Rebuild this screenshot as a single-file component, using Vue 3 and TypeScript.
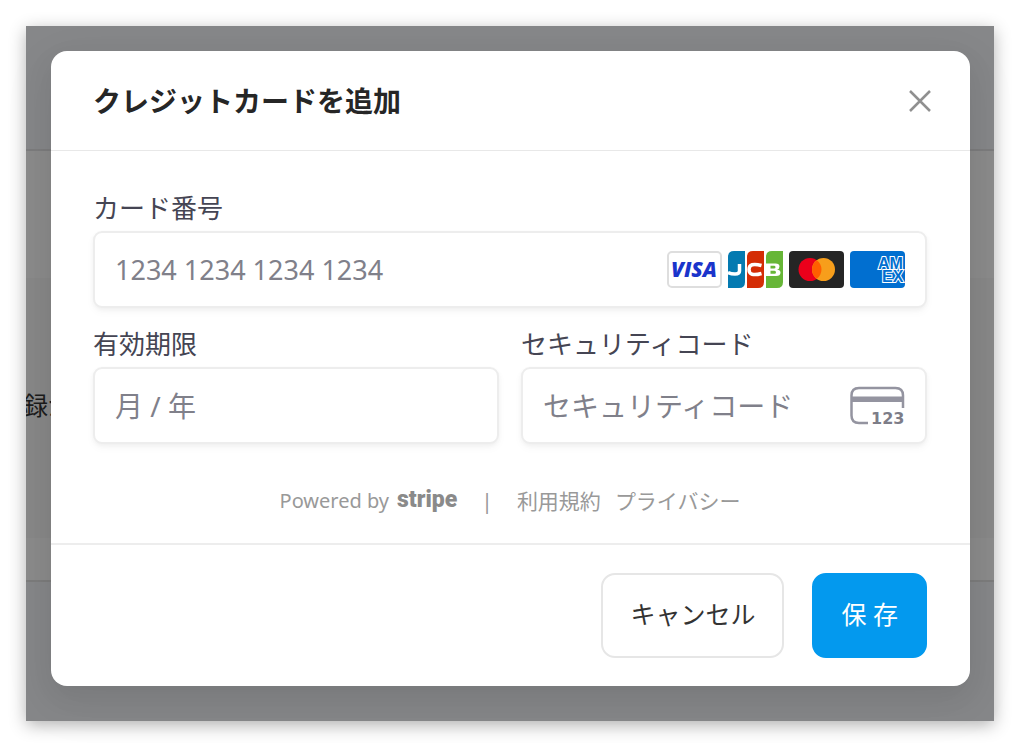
<script setup lang="ts">
import { ref } from 'vue'

const cardNumber = ref('')
const expiry = ref('')
const cvc = ref('')
</script>

<template>
  <main class="page">
    <div class="stage">
      <div class="backdrop" aria-hidden="true">
        <div class="backdrop-head"></div>
        <div class="backdrop-panel">
          <div class="backdrop-card"><span>録が</span></div>
        </div>
        <div class="backdrop-tail"></div>
      </div>

      <form class="modal" role="dialog" aria-labelledby="dialog-title" @submit.prevent>
        <header class="modal-head">
          <h1 id="dialog-title">クレジットカードを追加</h1>
          <button type="button" class="close" aria-label="閉じる">
            <svg viewBox="0 0 24 24" width="24" height="24">
              <path d="M2 2 22 22M22 2 2 22" fill="none" stroke="currentColor" stroke-width="2.5" />
            </svg>
          </button>
        </header>

        <div class="modal-body">
          <div class="fields">
            <div class="field wide">
              <label for="card-number">カード番号</label>
              <div class="control">
                <input id="card-number" v-model="cardNumber" class="digits" inputmode="numeric" placeholder="1234 1234 1234 1234" />
                <div class="brands">
                  <svg viewBox="0 0 55 37" role="img" aria-label="Visa">
                    <rect x="1" y="1" width="53" height="35" rx="4" fill="#fff" stroke="#dedede" stroke-width="2" />
                    <text x="27" y="26" class="visa">VISA</text>
                  </svg>
                  <svg viewBox="0 0 55 37" role="img" aria-label="JCB">
                    <path d="M6 0H17V31Q17 37 11 37H0V6Q0 0 6 0Z" fill="#047ab1" />
                    <path d="M25 0H36V31Q36 37 30 37H19V6Q19 0 25 0Z" fill="#d42d06" />
                    <path d="M44 0H55V31Q55 37 49 37H38V6Q38 0 44 0Z" fill="#67b637" />
                    <path d="M11.500 13V20Q11.500 23 7 23Q3 23 0 21.500" fill="none" stroke="#fff" stroke-width="3.500" />
                    <path d="M33.500 14.500Q21 11 21 18.500Q21 26 33.500 22.500" fill="none" stroke="#fff" stroke-width="3.500" />
                    <path d="M38 12.500H47.500Q51.500 12.500 51.500 15.500Q51.500 18 49 18.500Q52.500 19 52.500 21.500Q52.500 25 48 25H38Z" fill="#fff" />
                    <path d="M42.500 14.800H46Q47.500 14.800 47.500 16.200Q47.500 17.500 46 17.500H42.500ZM42.500 19.700H46.500Q48 19.700 48 21.200Q48 22.700 46.500 22.700H42.500Z" fill="#67b637" />
                  </svg>
                  <svg viewBox="0 0 55 37" role="img" aria-label="Mastercard">
                    <rect width="55" height="37" rx="4" fill="#252525" />
                    <circle cx="21" cy="18.500" r="11.500" fill="#eb001b" />
                    <circle cx="34.500" cy="18.500" r="11.500" fill="#f79e1b" />
                    <path d="M27.750 9.200a11.500 11.500 0 0 1 0 18.600a11.500 11.500 0 0 1 0-18.600Z" fill="#ff5f00" />
                  </svg>
                  <svg viewBox="0 0 55 37" role="img" aria-label="American Express">
                    <rect width="55" height="37" rx="4" fill="#016fd0" />
                    <text x="28" y="18" class="amex">AM</text>
                    <text x="32" y="31" class="amex">EX</text>
                  </svg>
                </div>
              </div>
            </div>

            <div class="field">
              <label for="expiry">有効期限</label>
              <div class="control">
                <input id="expiry" v-model="expiry" placeholder="月 / 年" />
              </div>
            </div>

            <div class="field">
              <label for="cvc">セキュリティコード</label>
              <div class="control">
                <input id="cvc" v-model="cvc" inputmode="numeric" placeholder="セキュリティコード" />
                <svg class="cvc-icon" viewBox="0 0 55 38" aria-hidden="true">
                  <path d="M18 36H9Q1.500 36 1.500 28.500V8.500Q1.500 1 9 1H45.500Q53 1 53 8.500V21" fill="none" stroke="#9494a0" stroke-width="2.500" />
                  <path d="M1 9.500H53V15H1Z" fill="#9494a0" />
                  <text x="21" y="37">123</text>
                </svg>
              </div>
            </div>
          </div>

          <div class="legal">
            <span class="powered">Powered by</span>
            <strong>stripe</strong>
            <span class="bar">|</span>
            <a href="#terms">利用規約</a>
            <a href="#privacy" class="privacy">プライバシー</a>
          </div>
        </div>

        <footer class="modal-foot">
          <button type="button" class="btn">キャンセル</button>
          <button type="submit" class="btn primary">保 存</button>
        </footer>
      </form>
    </div>
  </main>
</template>

<style>
body {
  margin: 0;
  background: #fff;
}
</style>

<style scoped>
* {
  box-sizing: border-box;
}

.page {
  padding: 26px 30px 32px 26px;
  font-family: "Noto Sans", "Noto Sans CJK JP", sans-serif;
}

.stage {
  position: relative;
  padding: 25px 24px 35px 25px;
  box-shadow: 0 4px 16px rgba(0, 0, 0, 0.3);
}

.backdrop {
  position: absolute;
  inset: 0;
  display: flex;
  flex-direction: column;
  overflow: hidden;
  background: #868789;
}

.backdrop-head {
  height: 125px;
  border-bottom: 2px solid #7c7c7d;
}

.backdrop-panel {
  flex: 1;
  padding: 127px 0 42px;
  background: #8b8b8b;
  border-bottom: 2px solid #7c7c7c;
}

.backdrop-card {
  display: flex;
  align-items: center;
  height: 100%;
  padding-bottom: 6px;
  background: #888888;
  color: #1c1c1c;
  font-size: 25px;
  line-height: 32px;
  white-space: nowrap;
}

.backdrop-card span {
  margin-left: -3px;
}

.backdrop-tail {
  height: 139px;
}

.modal {
  position: relative;
  overflow: hidden;
  border-radius: 16px;
  background: #fff;
  box-shadow: 0 10px 28px rgba(0, 0, 0, 0.07), 0 16px 50px 10px rgba(0, 0, 0, 0.04);
}

.modal-head {
  display: flex;
  align-items: center;
  justify-content: space-between;
  height: 100px;
  padding: 0 38px 0 42px;
  border-bottom: 1px solid #e8e8e8;
}

h1 {
  margin: 0;
  color: #262626;
  font-size: 28px;
  font-weight: 700;
  line-height: 40px;
}

.close {
  display: flex;
  padding: 0;
  border: 0;
  background: none;
  color: #909090;
}

.modal-body {
  padding: 41px 43px 26px 42px;
}

.fields {
  display: grid;
  grid-template-columns: 1fr 1fr;
  gap: 20px 22px;
}

.field {
  display: flex;
  flex-direction: column;
  gap: 7px;
  min-width: 0;
}

.wide {
  grid-column: 1 / -1;
}

label {
  color: #454553;
  font-size: 26px;
  line-height: 32px;
}

.control {
  display: flex;
  align-items: center;
  height: 77px;
  padding: 0 20px;
  border: 2px solid #ededed;
  border-radius: 9px;
  background: #fff;
  box-shadow: 0 2px 4px rgba(0, 0, 0, 0.04), 0 4px 10px rgba(0, 0, 0, 0.03);
}

input {
  flex: 1;
  min-width: 0;
  padding: 0;
  border: 0;
  outline: 0;
  background: none;
  color: #30313d;
  font-family: inherit;
  font-size: 28px;
  line-height: 40px;
}

.digits {
  font-size: 27px;
}

input::placeholder {
  color: #80808a;
  opacity: 1;
}

.brands {
  display: flex;
  gap: 6px;
}

.brands svg {
  width: 55px;
  height: 37px;
}

.visa {
  fill: #1a34cb;
  font: italic 800 21px "Open Sans", sans-serif;
  text-anchor: middle;
}

.amex {
  fill: #016fd0;
  stroke: #fff;
  stroke-width: 2px;
  paint-order: stroke;
  font: 700 16px "Liberation Sans", sans-serif;
}

.cvc-icon {
  width: 55px;
  height: 38px;
  overflow: visible;
}

.cvc-icon text {
  fill: #7d7d88;
  font: 700 16px "DejaVu Sans", sans-serif;
}

.legal {
  display: flex;
  align-items: center;
  justify-content: center;
  margin-top: 41px;
  color: #999;
  font-size: 21px;
  line-height: 32px;
}

.powered {
  font-size: 20px;
}

.legal strong {
  margin-left: 8px;
  padding-bottom: 3px;
  color: #8a8a8a;
  font-family: Roboto, sans-serif;
  font-size: 23px;
  font-weight: 900;
  line-height: 29px;
}

.bar {
  margin: 0 24px;
}

.legal a {
  color: inherit;
  text-decoration: none;
}

.privacy {
  margin-left: 14px;
}

.modal-foot {
  display: flex;
  justify-content: flex-end;
  gap: 28px;
  padding: 28px 43px 28px 42px;
  border-top: 2px solid #ededed;
}

.btn {
  height: 85px;
  padding: 0 27px 3px;
  border: 2px solid #e6e6e6;
  border-radius: 14px;
  background: #fff;
  color: #333;
  font-family: inherit;
  font-size: 25px;
  line-height: 32px;
}

.primary {
  border-color: #0399ee;
  background: #0399ee;
  color: #fff;
}
</style>
